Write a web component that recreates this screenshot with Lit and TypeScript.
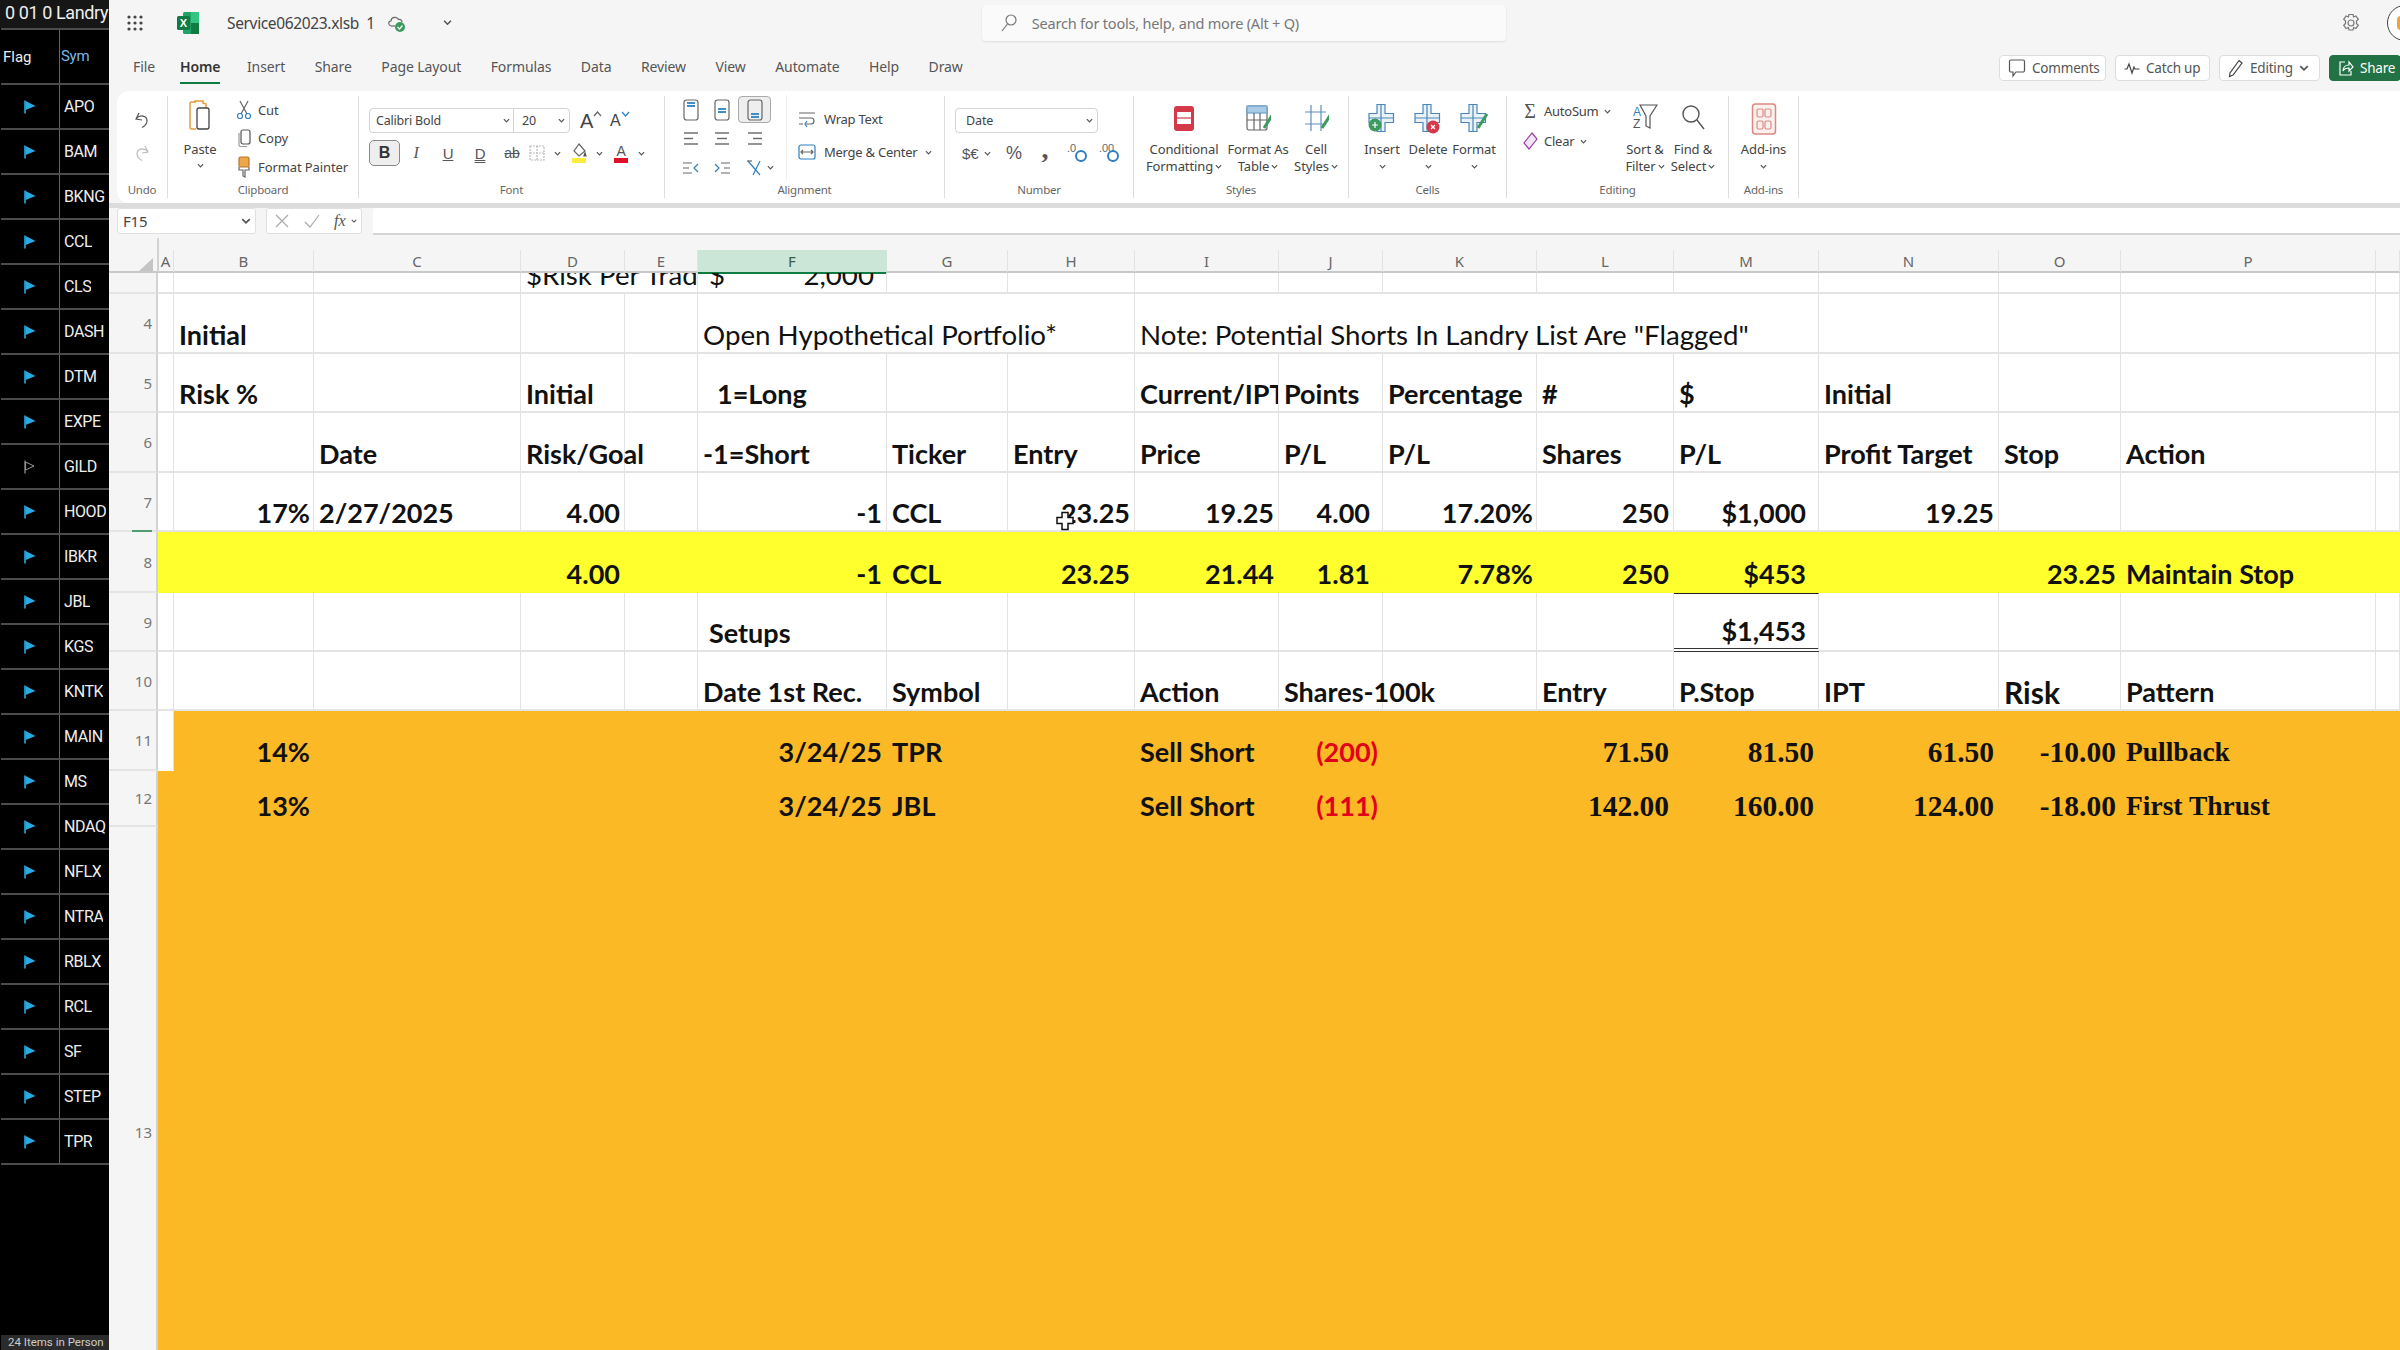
import { LitElement, html, css, svg } from 'lit';
import { customElement } from 'lit/decorators.js';

const SYMBOLS = ['APO','BAM','BKNG','CCL','CLS','DASH','DTM','EXPE','GILD','HOOD','IBKR','JBL','KGS','KNTK','MAIN','MS','NDAQ','NFLX','NTRA','RBLX','RCL','SF','STEP','TPR'];
const TABS = ['File','Home','Insert','Share','Page Layout','Formulas','Data','Review','View','Automate','Help','Draw'];
const COLS = ['A','B','C','D','E','F','G','H','I','J','K','L','M','N','O','P','Q'];

type Cell = [string, string, string?];
interface Row { n: string; h: number; kind?: string; span?: Record<string, number>; cells: Cell[]; }

const ROWS: Row[] = [
  { n: '', h: 21, span: { D: 2 }, cells: [['D', '$Risk Per Trad', 'n clip'], ['F', '2,000', 'n dollar']] },
  { n: '4', h: 60, span: { F: 3, I: 5 }, cells: [['B', 'Initial'], ['F', 'Open Hypothetical Portfolio*', 'n'], ['I', 'Note: Potential Shorts In Landry List Are "Flagged"', 'n']] },
  { n: '5', h: 59, cells: [['B', 'Risk %'], ['D', 'Initial'], ['F', '1=Long', 'in2'], ['I', 'Current/IPT', 'clip'], ['J', 'Points'], ['K', 'Percentage'], ['L', '#'], ['M', '$'], ['N', 'Initial']] },
  { n: '6', h: 60, cells: [['C', 'Date'], ['D', 'Risk/Goal'], ['F', '-1=Short'], ['G', 'Ticker'], ['H', 'Entry'], ['I', 'Price'], ['J', 'P/L'], ['K', 'P/L'], ['L', 'Shares'], ['M', 'P/L'], ['N', 'Profit Target'], ['O', 'Stop'], ['P', 'Action']] },
  { n: '7', h: 59, cells: [['B', '17%', 'r pct'], ['C', '2/27/2025'], ['D', '4.00', 'r'], ['F', '-1', 'r'], ['G', 'CCL'], ['H', '23.25', 'r'], ['I', '19.25', 'r'], ['J', '4.00', 'r p12'], ['K', '17.20%', 'r pct'], ['L', '250', 'r'], ['M', '$1,000', 'r p12'], ['N', '19.25', 'r']] },
  { n: '8', h: 61, kind: 'yellow', cells: [['D', '4.00', 'r'], ['F', '-1', 'r'], ['G', 'CCL'], ['H', '23.25', 'r'], ['I', '21.44', 'r'], ['J', '1.81', 'r p12'], ['K', '7.78%', 'r pct'], ['L', '250', 'r'], ['M', '$453', 'r p12'], ['O', '23.25', 'r'], ['P', 'Maintain Stop']] },
  { n: '9', h: 59, cells: [['F', 'Setups', 'in1'], ['M', '$1,453', 'r p12 sum']] },
  { n: '10', h: 59, cells: [['F', 'Date 1st Rec.'], ['G', 'Symbol'], ['I', 'Action'], ['J', 'Shares-100k'], ['L', 'Entry'], ['M', 'P.Stop'], ['N', 'IPT'], ['O', 'Risk', 'risk'], ['P', 'Pattern']] },
  { n: '11', h: 60, kind: 'orange inset', cells: [['B', '14%', 'r pct'], ['F', '3/24/25', 'r'], ['G', 'TPR'], ['I', 'Sell Short'], ['J', '(200)', 'r red'], ['L', '71.50', 'r num'], ['M', '81.50', 'r num'], ['N', '61.50', 'r num'], ['O', '-10.00', 'r num'], ['P', 'Pullback', 'ser']] },
  { n: '12', h: 56, kind: 'orange', cells: [['B', '13%', 'r pct'], ['F', '3/24/25', 'r'], ['G', 'JBL'], ['I', 'Sell Short'], ['J', '(111)', 'r red'], ['L', '142.00', 'r num'], ['M', '160.00', 'r num'], ['N', '124.00', 'r num'], ['O', '-18.00', 'r num'], ['P', 'First Thrust', 'ser']] },
  { n: '13', h: 612, kind: 'orange', cells: [] },
];

const ic = (w: number, h: number, body: unknown) =>
  html`<svg class="ic" width=${w} height=${h} viewBox="0 0 ${w} ${h}" fill="none" stroke="#555" stroke-width="1.2">${body}</svg>`;
const chev = (s = 7) =>
  html`<svg class="chev" width=${s} height=${s} viewBox="0 0 8 8" fill="none" stroke="#555" stroke-width="1.4"><path d="M1 2.5 4 5.5 7 2.5"/></svg>`;

const flag = (on: boolean) => html`<svg width="12" height="14" viewBox="0 0 12 14">
  ${on
    ? svg`<path d="M1 0.5V13.5" stroke="#29abe2" stroke-width="1.6"/><path d="M1.6 1 11.5 6 1.6 10Z" fill="#29abe2"/>`
    : svg`<path d="M1 0.5V13.5" stroke="#999" stroke-width="1.2"/><path d="M1.6 2 10 6 1.6 10Z" fill="none" stroke="#999"/>`}
</svg>`;

const lines = (rows: [number, number][], color = '#666') => ic(18, 18, rows.map(([x, w], i) =>
  svg`<path d="M${x} ${3 + i * 5.5}h${w}" stroke=${color} stroke-width="1.4"/>`));

const vbox = (y: number) => ic(18, 24, svg`
  <rect x="2" y="2" width="14" height="20" rx="2.5" stroke="#666"/>
  <path d="M5 ${y}h8M5 ${y + 3}h8" stroke="#3f8fc6" stroke-width="1.8"/>`);

const penBadge = svg`<path d="M19 27 28 13" stroke="#3c9a5f" stroke-width="3"/>`;
const crossShape = svg`<path d="M10 3.5h8v9h8.5v9H18v9h-8v-9H2v-9h8z" stroke="#4a87b8" fill="#eaf2f8" stroke-width="1.2"/><path d="M2 17h24M14 4v26" stroke="#4a87b8"/>`;
const decimal = (t: string) => ic(20, 22, svg`
  <text x="0" y="10" font-size="11" font-family="Liberation Sans" fill="#666" stroke="none">${t}</text>
  <circle cx="14" cy="14" r="5" stroke="#2e7fc1" stroke-width="2"/>`);

@customElement('app-root')
export class AppRoot extends LitElement {
  static styles = css`
    :host { display: block; width: 2400px; height: 1350px; overflow: hidden; font-family: 'Noto Sans', sans-serif; color: #444; background: #f5f5f5; }
    .app { display: flex; height: 1350px; }
    .ic, .chev { display: block; flex: none; }

    /* left list */
    .side { width: 109px; flex: none; background: #000; color: #eee; font-family: Roboto, sans-serif; display: flex; flex-direction: column; }
    .side-title { height: 28px; padding-left: 5px; font-size: 18px; line-height: 26px; background: #161616; white-space: nowrap; overflow: hidden; letter-spacing: -0.4px; box-sizing: border-box; }
    .side-head, .side-row { display: flex; border-top: 2px solid #4c4c4c; margin-left: 1px; }
    .side-head { height: 53px; align-items: center; font-size: 15px; }
    .side-row { height: 43px; font-size: 16px; letter-spacing: -0.4px; }
    .side-flag { width: 59px; height: 100%; flex: none; border-right: 1px solid #666; display: flex; align-items: center; padding-left: 23px; box-sizing: border-box; }
    .side-head .side-flag { padding-left: 2px; }
    .side-sym { padding-left: 4px; line-height: 43px; white-space: nowrap; overflow: hidden; }
    .side-head .side-sym { color: #7cb6e6; line-height: 53px; padding-left: 1px; letter-spacing: -0.3px; }
    .side-end { border-top: 2px solid #4c4c4c; margin-left: 1px; flex: 1; }
    .side-foot { height: 15px; background: #2b2b2b; color: #ccc; font-size: 11.5px; line-height: 15px; padding-left: 7px; white-space: nowrap; overflow: hidden; margin-left: 1px; flex: none; }

    .main { flex: 1; min-width: 0; display: flex; flex-direction: column; overflow: hidden; }

    /* title bar */
    .top { height: 45px; flex: none; display: flex; align-items: center; }
    .waffle { margin-left: 17px; }
    .excel { margin-left: 32px; }
    .file { margin-left: 27px; font-size: 15.5px; color: #444; letter-spacing: -0.35px; white-space: nowrap; }
    .cloud { margin-left: 11px; }
    .top .chev { margin-left: 37px; }
    .search { margin-left: 530px; width: 524px; height: 36px; flex: none; box-sizing: border-box; background: #fafafa; border-radius: 4px; box-shadow: 0 1px 2px #ddd; display: flex; align-items: center; gap: 14px; padding-left: 18px; font-size: 14.5px; color: #777; letter-spacing: -0.2px; white-space: nowrap; }
    .gear { margin-left: 835px; }
    .avatar { margin-left: 26px; width: 36px; height: 36px; flex: none; box-sizing: border-box; border: 1.5px solid #444; border-radius: 50%; background: #fff; display: flex; align-items: center; padding-left: 9px; }
    .avatar span { width: 8px; height: 14px; background: #f0a33c; border-radius: 4px; }

    /* tabs */
    .tabs { height: 46px; flex: none; display: flex; align-items: flex-start; padding-left: 24px; gap: 29.5px; font-size: 14px; color: #555; box-sizing: border-box; padding-top: 12px; }
    .tab { height: 25px; white-space: nowrap; letter-spacing: -0.1px; }
    .tab.on { color: #333; font-weight: 600; border-bottom: 2px solid #107c41; margin: 0 -3px 0 -4.5px; }
    .actions { margin-left: auto; display: flex; gap: 9px; margin-top: -2px; margin-right: -1px; }
    .act { height: 26px; box-sizing: border-box; background: #fff; border: 1px solid #ddd; border-radius: 4px; display: flex; align-items: center; gap: 6px; padding-left: 8px; font-size: 13.5px; color: #555; letter-spacing: -0.2px; white-space: nowrap; }
    .a-com { width: 107px; }
    .a-cat { width: 95px; }
    .a-edit { width: 101px; }
    .a-share { width: 72px; background: #217346; border-color: #217346; color: #fff; }

    /* ribbon */
    .ribbon { height: 112px; flex: none; margin-left: 8px; background: #fff; border-radius: 12px 0 0 12px; display: flex; padding-top: 5px; box-sizing: border-box; font-size: 13px; color: #444; letter-spacing: -0.1px; }
    .grp { height: 102px; box-sizing: border-box; border-right: 1px solid #ddd; display: flex; flex-direction: column; flex: none; }
    .grp-body { height: 85px; display: flex; }
    .grp-name { height: 17px; line-height: 17px; text-align: center; font-size: 11.5px; color: #666; letter-spacing: -0.2px; white-space: nowrap; }
    .g-undo { width: 51px; }
    .g-clip { width: 191px; }
    .g-font { width: 306px; }
    .g-align { width: 280px; }
    .g-num { width: 189px; }
    .g-style { width: 215px; }
    .g-cells { width: 158px; }
    .g-edit { width: 222px; }
    .g-add { width: 70px; }

    .undo-col { width: 100%; display: flex; flex-direction: column; align-items: center; padding-top: 14px; gap: 13px; }
    .paste { width: 64px; display: flex; flex-direction: column; align-items: center; padding-top: 2px; flex: none; }
    .paste b { font-weight: 400; margin-top: 6px; line-height: 18px; }
    .paste .chev { margin-top: 4px; }
    .clip-list { display: flex; flex-direction: column; padding-left: 4px; }
    .clip-list div { display: flex; align-items: center; height: 31px; gap: 6px; white-space: nowrap; }

    .font-body { flex-direction: column; padding: 12px 0 0 10px; }
    .combo { height: 25px; box-sizing: border-box; border: 1px solid #d4d4d4; border-radius: 4px; display: flex; align-items: center; font-size: 12.5px; white-space: nowrap; }
    .c-name { width: 144px; padding: 0 3px 0 6px; box-sizing: border-box; display: flex; justify-content: space-between; align-items: center; border-right: 1px solid #d4d4d4; height: 100%; letter-spacing: -0.2px; }
    .c-size { flex: 1; padding: 0 4px 0 8px; display: flex; justify-content: space-between; align-items: center; }
    .fr { display: flex; align-items: center; }
    .f-size { width: 201px; }
    .grow { font-family: 'Liberation Sans', sans-serif; font-size: 20px; color: #444; display: flex; align-items: flex-start; margin-left: 10px; width: 26px; line-height: 22px; }
    .grow.small { font-size: 16px; margin-left: 4px; align-items: flex-start; }
    .f2 { margin-top: 7px; height: 26px; }
    .btn-b { width: 31px; height: 26px; box-sizing: border-box; border: 1px solid #8a8a8a; border-radius: 5px; background: #eee; text-align: center; font: 700 16px/24px 'Liberation Sans', sans-serif; color: #333; }
    .fx { font: 16px 'Liberation Serif', serif; color: #555; text-align: center; width: 32px; }
    .fx.i { font-style: italic; }
    .fx.u { text-decoration: underline; font-family: 'Liberation Sans', sans-serif; font-size: 15px; }
    .fx.d { text-decoration: underline double; font-family: 'Liberation Sans', sans-serif; font-size: 15px; }
    .fx.s { text-decoration: line-through; font-family: 'Liberation Sans', sans-serif; font-size: 14px; }
    .f2 > .chev { margin: 0 9px 0 8px; }

    .al-grid { width: 122px; flex: none; box-sizing: border-box; border-right: 1px solid #eee; display: grid; grid-template-columns: 31px 32px 33px; grid-template-rows: 29px 29px 29px; padding-left: 10px; align-items: center; justify-items: center; margin-top: -1px; }
    .al-sel { border: 1px solid #aaa; border-radius: 4px; background: #eee; width: 31px; height: 25px; display: flex; align-items: center; justify-content: center; }
    .al-last { display: flex; align-items: center; gap: 4px; margin-left: 9px; }
    .wrap { display: flex; flex-direction: column; padding-left: 11px; padding-top: 14px; gap: 15px; }
    .wrap div { display: flex; align-items: center; gap: 8px; height: 18px; white-space: nowrap; letter-spacing: -0.25px; }

    .num-body { flex-direction: column; padding: 12px 0 0 10px; }
    .c-date { width: 143px; justify-content: space-between; padding: 0 4px 0 10px; }
    .n2 { margin-top: 7px; height: 26px; }
    .numtx { font: 15px 'Liberation Sans', sans-serif; color: #555; }
    .n-a { margin-left: 7px; width: 20px; }
    .n2 > .chev { margin: 0 0 0 2px; }
    .n-p { width: 30px; margin-left: 8px; text-align: center; font-size: 18px; }
    .n-c { width: 32px; text-align: center; font: 700 28px/18px 'Liberation Serif', serif; color: #555; margin-top: -8px; }
    .n-d { width: 32px; display: flex; justify-content: center; }

    .big { display: flex; flex-direction: column; align-items: center; flex: none; text-align: center; line-height: 17px; padding-top: 5px; white-space: nowrap; }
    .big .ic { margin-bottom: 4px; height: 36px; }
    .big span { display: flex; align-items: center; justify-content: center; gap: 2px; height: 17px; }
    .st-body { padding-left: 6px; }
    .w88 { width: 88px; }
    .w60 { width: 60px; }
    .w56 { width: 56px; }
    .ce-body { padding-left: 10px; }
    .w46 { width: 46px; }
    .w48 { width: 48px; }
    .ed-list { width: 114px; flex: none; display: flex; flex-direction: column; padding: 0 0 0 15px; box-sizing: border-box; }
    .ed-list div { display: flex; align-items: center; height: 30px; gap: 6px; white-space: nowrap; letter-spacing: -0.25px; }
    .sigma { font: 20px 'Liberation Serif', serif; color: #555; width: 16px; text-align: center; }
    .add { width: 100%; }

    .band { height: 5px; flex: none; background: #dcdcdc; }

    /* formula bar */
    .fbar { height: 27px; flex: none; display: flex; padding-left: 8px; gap: 10px; background: #f5f5f5; font-size: 15px; }
    .namebox { width: 139px; height: 26px; box-sizing: border-box; background: #fff; border: 1px solid #e0e0e0; border-radius: 3px; display: flex; align-items: center; justify-content: space-between; padding: 0 4px 0 5px; letter-spacing: -0.2px; }
    .fnbox { width: 96px; height: 26px; box-sizing: border-box; background: #fff; border: 1px solid #e0e0e0; border-radius: 3px; display: flex; align-items: center; gap: 13px; padding-left: 7px; }
    .fnbox i { font: italic 16px 'Liberation Serif', serif; color: #555; margin-right: -8px; }
    .finput { flex: 1; height: 27px; box-sizing: border-box; margin-left: 1px; background: #fff; border-radius: 3px 0 0 0; border-bottom: 2px solid #d4d4d4; }

    /* sheet */
    .sheet { position: relative; flex: 1; min-height: 0; background: #f5f5f5; margin-top: 3px; }
    .grid { display: grid; grid-template-columns: 49px 16px 140px 207px 104px 73px 189px 121px 127px 144px 104px 154px 137px 145px 180px 122px 255px 24px; }
    .heads { height: 35px; box-sizing: border-box; border-bottom: 2px solid #c8c8c8; }
    .corner { border-right: 2px solid #d2d2d2; margin-right: -1px; display: flex; align-items: flex-end; justify-content: flex-end; padding: 0 4px 1px 0; }
    .corner svg { display: block; }
    .hd { margin-top: 12px; text-align: center; font-size: 15px; line-height: 22px; color: #666; border-right: 1px solid #e2e2e2; }
    .hd.sel { background: #cbe6d6; border-bottom: 2px solid #107c41; margin-bottom: -2px; color: #3c5a49; border-right-color: #cbe6d6; }

    .rownum { background: #f5f5f5; color: #777; font-size: 15px; padding-right: 4px; display: flex; align-items: center; justify-content: flex-end; border-right: 2px solid #d2d2d2; border-bottom: 2px solid #e4e4e4; box-sizing: border-box; position: relative; }
    .rownum.mark::after { content: ''; position: absolute; left: 23px; right: 4px; bottom: -2px; height: 2px; background: #107c41; opacity: 0.7; }

    .row { background: #fff; overflow: hidden; grid-template-rows: minmax(0, 1fr); }
    .cell { box-sizing: border-box; min-width: 0; min-height: 0; border-right: 1px solid #e3e3e3; border-bottom: 2px solid #e4e4e4; display: flex; align-items: flex-end; padding: 0 4px 0 5px; font: 700 27px/34px Lato, 'Liberation Sans', sans-serif; color: #111; white-space: nowrap; }
    .cell.n { font-weight: 400; font-size: 27.7px; }
    .cell.clip { overflow: hidden; }
    .cell.r { justify-content: flex-end; }
    .cell.p12 { padding-right: 12px; }
    .cell.pct { padding-right: 3px; }
    .cell.in1 { padding-left: 11px; }
    .cell.in2 { padding-left: 19px; }
    .cell.risk { font-size: 30px; }
    .cell.dollar { justify-content: space-between; padding-right: 12px; }
    .cell.dollar::before { content: '$'; padding-left: 6px; }
    .cell.sum { border-top: 1px solid #222; border-bottom: 4px double #333; }

    .yellow { background: #ffff2e; }
    .orange { background: #fbb926; }
    .yellow .cell, .orange .cell { border-color: transparent; }
    .orange .cell { align-items: flex-start; padding-top: 24px; }
    .inset .cell:nth-child(2) { background: #fff; border-right-color: #e3e3e3; }
    .orange:not(.inset) .cell { padding-top: 18px; }
    .orange .rownum { border-bottom-color: #e4e4e4; }
    .cell.red { color: #e3001b; }
    .cell.num { font: 700 29.5px/34px 'Liberation Serif', serif; }
    .cell.ser { font: 700 27.5px/34px 'Liberation Serif', serif; }

    .cursor { position: absolute; left: 947px; top: 273px; }
  `;

  private renderRow(r: Row) {
    const out: unknown[] = [];
    for (let i = 0; i < COLS.length; i++) {
      const col = COLS[i];
      const span = r.span?.[col] ?? 1;
      const c = r.cells.find((x) => x[0] === col);
      out.push(html`<div class="cell ${c?.[2] ?? ''}" style=${span > 1 ? `grid-column: span ${span}` : ''}>${c?.[1] ?? ''}</div>`);
      i += span - 1;
    }
    return html`<div class="grid row ${r.kind ?? ''}" style="height:${r.h}px">
      <div class="rownum ${r.n === '7' ? 'mark' : ''}">${r.n}</div>${out}
    </div>`;
  }

  private renderSide() {
    return html`<aside class="side">
      <div class="side-title">0 01 0 Landry</div>
      <div class="side-head"><div class="side-flag">Flag</div><div class="side-sym">Sym</div></div>
      ${SYMBOLS.map((s) => html`<div class="side-row"><div class="side-flag">${flag(s !== 'GILD')}</div><div class="side-sym">${s}</div></div>`)}
      <div class="side-end"></div>
      <div class="side-foot">24 Items in Person</div>
    </aside>`;
  }

  private renderTop() {
    const dots = [3, 9, 15].flatMap((x) => [3, 9, 15].map((y) => svg`<circle cx=${x} cy=${y} r="1.6" fill="#444" stroke="none"/>`));
    return html`<div class="top">
      <span class="waffle">${ic(18, 18, dots)}</span>
      <span class="excel">${ic(24, 24, svg`
        <rect x="7" y="1" width="16" height="22" rx="1.5" fill="#21a366" stroke="none"/>
        <rect x="15" y="1" width="8" height="11" fill="#33c481" stroke="none"/>
        <rect x="15" y="12" width="8" height="11" fill="#107c41" stroke="none"/>
        <rect x="1" y="5" width="13" height="14" rx="1.5" fill="#107c41" stroke="none"/>
        <text x="7.5" y="16" text-anchor="middle" font-size="11" font-family="Liberation Sans" font-weight="700" fill="#fff" stroke="none">X</text>`)}</span>
      <span class="file">Service062023.xlsb&nbsp; 1</span>
      <span class="cloud">${ic(20, 20, svg`
        <path d="M5 13C2 12 2 8 5 8 5 4 11 3 12.500 6.500 15 6 16 8 16 9" stroke="#666"/>
        <path d="M5 13h4" stroke="#666"/><circle cx="14" cy="14" r="5" fill="#3c9a5f" stroke="none"/>
        <path d="M11.500 14 13.500 16 16.500 12.500" stroke="#fff"/>`)}</span>
      ${chev(9)}
      <div class="search">${ic(18, 20, svg`<circle cx="11" cy="7" r="5" stroke="#777"/><path d="M7.500 11 2 18" stroke="#777"/>`)}Search for tools, help, and more (Alt + Q)</div>
      <span class="gear">${ic(20, 20, svg`
        <path d="M8 1.500h4l.6 2.500 2.300-1 2.400 3.300-1.800 1.700.0 2.500 1.800 1.700-2.400 3.300-2.300-1-.6 2.500H8l-.6-2.500-2.300 1-2.400-3.300 1.800-1.700v-2.500L2.700 6.300 5.100 3l2.300 1z" stroke="#777"/>
        <circle cx="10" cy="10" r="3" stroke="#777"/>`)}</span>
      <div class="avatar"><span></span></div>
    </div>`;
  }

  private renderTabs() {
    return html`<div class="tabs">
      ${TABS.map((t) => html`<div class="tab ${t === 'Home' ? 'on' : ''}">${t}</div>`)}
      <div class="actions">
        <div class="act a-com">${ic(18, 20, svg`<path d="M3 2h12a1.500 1.500 0 0 1 1.500 1.500v9a1.500 1.500 0 0 1-1.500 1.500H8l-3 4v-4H3a1.500 1.500 0 0 1-1.500-1.500v-9A1.500 1.500 0 0 1 3 2z"/>`)}Comments</div>
        <div class="act a-cat">${ic(16, 14, svg`<path d="M0.500 8H3L5 3 8 12 10 6 11 8H15.500" stroke="#444"/>`)}Catch up</div>
        <div class="act a-edit">${ic(16, 20, svg`<path d="M11 2.500 14 5 5 17 1.500 18.500 2 15z" stroke="#444"/>`)}Editing ${chev(10)}</div>
        <div class="act a-share">${ic(16, 18, svg`<path d="M7 3H2v13h11v-4" stroke="#fff"/><path d="M5 12C5 8 8 6 11 6V3l4 5-4 4V9C8 9 6 10 5 12z" stroke="#fff"/>`)}Share</div>
      </div>
    </div>`;
  }

  private renderRibbon() {
    const big = (label: unknown, icon: unknown, cls: string) => html`<div class="big ${cls}">${icon}${label}</div>`;
    return html`<div class="ribbon">
      <div class="grp g-undo">
        <div class="grp-body"><div class="undo-col">
          ${ic(20, 20, svg`<path d="M7 3 4 9l6 1" stroke="#555"/><path d="M4.500 8.500C8 4 15 6 15 10.500c0 3-2 5.500-5 7" stroke="#555"/>`)}
          ${ic(20, 20, svg`<path d="M13 3l3 6-6 1" stroke="#bbb"/><path d="M15.500 8.500C12 4 5 6 5 10.500c0 3 2 5.500 5 7" stroke="#bbb"/>`)}
        </div></div>
        <div class="grp-name">Undo</div>
      </div>

      <div class="grp g-clip">
        <div class="grp-body">
          <div class="paste">
            ${ic(24, 36, svg`<path d="M7 4H3.500A1.500 1.500 0 0 0 2 5.500v24A1.500 1.500 0 0 0 3.500 31H8" stroke="#e39a3b" stroke-width="1.5"/><path d="M7 5V3h8v2l3 1v4" stroke="#e39a3b" stroke-width="1.500"/><rect x="9" y="10" width="12" height="21" rx="2" stroke="#444" fill="#fff" stroke-width="1.3"/>`)}
            <b>Paste</b>${chev()}
          </div>
          <div class="clip-list">
            <div>${ic(16, 20, svg`<path d="M4 1 11 14M12 1 5 14" stroke="#666"/><circle cx="4" cy="16" r="2.500" stroke="#2e7fc1"/><circle cx="12" cy="16" r="2.500" stroke="#2e7fc1"/>`)}Cut</div>
            <div>${ic(16, 20, svg`<rect x="5" y="2" width="9" height="14" rx="2" stroke="#555"/><path d="M3 5v12a1.500 1.500 0 0 0 1.500 1.500H11" stroke="#999"/>`)}Copy</div>
            <div>${ic(16, 22, svg`<rect x="3" y="1" width="10" height="10" rx="1.500" fill="#eda64a" stroke="#b8742a"/><path d="M3 11v3h4v6l2 1v-7h4v-3" stroke="#666"/>`)}Format Painter</div>
          </div>
        </div>
        <div class="grp-name">Clipboard</div>
      </div>

      <div class="grp g-font">
        <div class="grp-body font-body">
          <div class="fr">
            <div class="combo f-size"><div class="c-name">Calibri Bold ${chev()}</div><div class="c-size">20 ${chev()}</div></div>
            <div class="grow">A${ic(9, 9, svg`<path d="M1 6 4.500 2 8 6" stroke="#666"/>`)}</div>
            <div class="grow small">A${ic(9, 9, svg`<path d="M1 2 4.500 6 8 2" stroke="#2e7fc1"/>`)}</div>
          </div>
          <div class="fr f2">
            <div class="btn-b">B</div>
            <div class="fx i">I</div><div class="fx u">U</div><div class="fx d">D</div><div class="fx s">ab</div>
            ${ic(18, 18, svg`<rect x="2" y="2" width="14" height="14" stroke="#bbb" stroke-dasharray="2 1"/><path d="M9 2v14M2 9h14" stroke="#bbb" stroke-dasharray="2 1"/>`)}
            ${chev()}
            ${ic(18, 22, svg`<path d="M9 2 15 9 9 14 4 9z" stroke="#666"/><path d="M15 11l1 3-2 0z" fill="#666"/><rect x="2" y="16" width="14" height="5" fill="#ffeb3b" stroke="none"/>`)}
            ${chev()}
            ${html`<svg class="ic" width="18" height="22" viewBox="0 0 18 22"><text x="9" y="14" text-anchor="middle" font-size="14" font-family="Liberation Sans" fill="#555">A</text><rect x="2" y="16" width="14" height="5" fill="#e0102a"/></svg>`}
            ${chev()}
          </div>
        </div>
        <div class="grp-name">Font</div>
      </div>

      <div class="grp g-align">
        <div class="grp-body">
          <div class="al-grid">
            ${vbox(5)}${vbox(11)}
            <div class="al-sel">${vbox(16)}</div>
            ${lines([[2, 14], [2, 9], [2, 14]])}
            ${lines([[2, 14], [4, 10], [2, 14]])}
            ${lines([[2, 14], [7, 9], [2, 14]])}
            ${ic(18, 18, svg`<path d="M1 4h9M1 9h6M1 14h9" stroke="#666"/><path d="M16 5 12 9l4 4" stroke="#2e7fc1"/>`)}
            ${ic(18, 18, svg`<path d="M8 4h9M11 9h6M8 14h9" stroke="#666"/><path d="M2 5 6 9l-4 4" stroke="#2e7fc1"/>`)}
            <div class="al-last">${ic(18, 20, svg`<path d="M3 3 15 17M15 3 8 17" stroke="#2e7fc1"/><path d="M2 3h5" stroke="#666"/>`)}${chev()}</div>
          </div>
          <div class="wrap">
            <div>${ic(18, 18, svg`<path d="M1 3h16M1 8h12a3 3 0 0 1 0 6H8M1 14h4" stroke="#666"/><path d="M9 11l-2 3 2 3" stroke="#2e7fc1"/>`)}Wrap Text</div>
            <div>${ic(18, 18, svg`<rect x="1" y="2" width="16" height="14" rx="2" stroke="#2e7fc1"/><path d="M3 9h12M5 7 3 9l2 2M13 7l2 2-2 2" stroke="#666"/>`)}Merge &amp; Center ${chev()}</div>
          </div>
        </div>
        <div class="grp-name">Alignment</div>
      </div>

      <div class="grp g-num">
        <div class="grp-body num-body">
          <div class="combo c-date">Date ${chev()}</div>
          <div class="fr n2">
            <span class="numtx n-a">$€</span>${chev()}
            <span class="numtx n-p">%</span>
            <span class="n-c">,</span>
            <span class="n-d">${decimal('.0')}</span>
            <span class="n-d">${decimal('.00')}</span>
          </div>
        </div>
        <div class="grp-name">Number</div>
      </div>

      <div class="grp g-style">
        <div class="grp-body st-body">
          ${big(html`<span>Conditional</span><span>Formatting ${chev()}</span>`, ic(24, 36, svg`<rect x="2" y="5" width="20" height="25" rx="3" fill="#d4394a" stroke="none"/><rect x="5" y="11" width="14" height="12" fill="#fff" stroke="none"/><path d="M5 17h14" stroke="#d4394a"/>`), 'w88')}
          ${big(html`<span>Format As</span><span>Table ${chev()}</span>`, ic(26, 36, svg`<rect x="2" y="5" width="20" height="24" rx="2" stroke="#666"/><rect x="2" y="5" width="20" height="7" fill="#a9cbe6" stroke="#6aa2cc"/><path d="M9 12v17M15 12v17M2 19h20" stroke="#666"/>${penBadge}`), 'w60')}
          ${big(html`<span>Cell</span><span>Styles ${chev()}</span>`, ic(26, 36, svg`<path d="M8 4v26M18 4v26M2 11h21M2 23h21" stroke="#5d8fc0"/>${penBadge}`), 'w56')}
        </div>
        <div class="grp-name">Styles</div>
      </div>

      <div class="grp g-cells">
        <div class="grp-body ce-body">
          ${big(html`<span>Insert</span><span>${chev()}</span>`, ic(30, 36, svg`${crossShape}<circle cx="8" cy="24" r="6.500" fill="#3c9a5f" stroke="none"/><path d="M5 24h6M8 21v6" stroke="#fff"/>`), 'w46')}
          ${big(html`<span>Delete</span><span>${chev()}</span>`, ic(30, 36, svg`${crossShape}<circle cx="20" cy="26" r="6.500" fill="#d4394a" stroke="none"/><path d="M18 24l4 4M22 24l-4 4" stroke="#fff"/>`), 'w46')}
          ${big(html`<span>Format</span><span>${chev()}</span>`, ic(30, 36, svg`${crossShape}${penBadge}`), 'w46')}
        </div>
        <div class="grp-name">Cells</div>
      </div>

      <div class="grp g-edit">
        <div class="grp-body">
          <div class="ed-list">
            <div><span class="sigma">Σ</span>AutoSum ${chev()}</div>
            <div>${ic(16, 20, svg`<path d="M10 2 15 8 7 18 2 12z" stroke="#9b3fa8" fill="#f3e4f5"/>`)}Clear ${chev()}</div>
          </div>
          ${big(html`<span>Sort &amp;</span><span>Filter ${chev()}</span>`, ic(26, 36, svg`<text x="1" y="15" font-size="12" font-family="Liberation Sans" fill="#2e7fc1" stroke="none">A</text><text x="1" y="27" font-size="12" font-family="Liberation Sans" fill="#555" stroke="none">Z</text><path d="M8 4H25L18 15V27L14 25V15z" stroke="#555"/>`), 'w48')}
          ${big(html`<span>Find &amp;</span><span>Select ${chev()}</span>`, ic(26, 36, svg`<circle cx="11" cy="13" r="8" stroke="#555" stroke-width="1.400"/><path d="M17 19 24 28" stroke="#555" stroke-width="1.400"/>`), 'w48')}
        </div>
        <div class="grp-name">Editing</div>
      </div>

      <div class="grp g-add">
        <div class="grp-body">
          ${big(html`<span>Add-ins</span><span>${chev()}</span>`, ic(26, 36, svg`<rect x="1.500" y="3" width="23" height="30" rx="3" stroke="#d98a80" fill="#fdf1ef" stroke-width="1.500"/><rect x="6" y="8" width="6" height="8" rx="1.500" stroke="#d98a80"/><rect x="14" y="8" width="6" height="8" rx="1.500" stroke="#d98a80"/><rect x="6" y="20" width="6" height="8" rx="1.500" stroke="#d98a80"/><rect x="14" y="20" width="6" height="8" rx="1.500" stroke="#d98a80"/>`), 'add')}
        </div>
        <div class="grp-name">Add-ins</div>
      </div>
    </div>`;
  }

  render() {
    return html`<div class="app">
      ${this.renderSide()}
      <div class="main">
        ${this.renderTop()}
        ${this.renderTabs()}
        ${this.renderRibbon()}
        <div class="band"></div>
        <div class="fbar">
          <div class="namebox">F15 ${chev(10)}</div>
          <div class="fnbox">
            ${ic(16, 16, svg`<path d="M2 2 14 14M14 2 2 14" stroke="#aaa"/>`)}
            ${ic(18, 16, svg`<path d="M2 9 7 14 16 2" stroke="#aaa"/>`)}
            <i>fx</i>${chev(6)}
          </div>
          <div class="finput"></div>
        </div>
        <div class="sheet">
          <div class="grid heads">
            <div class="corner"><svg width="14" height="13" viewBox="0 0 14 13"><path d="M14 0V13H0z" fill="#c4c4c4"/></svg></div>
            ${COLS.map((c) => html`<div class="hd ${c === 'F' ? 'sel' : ''}">${c === 'Q' ? '' : c}</div>`)}
          </div>
          ${ROWS.map((r) => this.renderRow(r))}
          <svg class="cursor" width="18" height="20" viewBox="0 0 18 20"><path d="M6 1.500h6v5h5v6h-5v6H6v-6H1v-6h5z" fill="#fff" stroke="#111" stroke-width="1.500"/></svg>
        </div>
      </div>
    </div>`;
  }
}
